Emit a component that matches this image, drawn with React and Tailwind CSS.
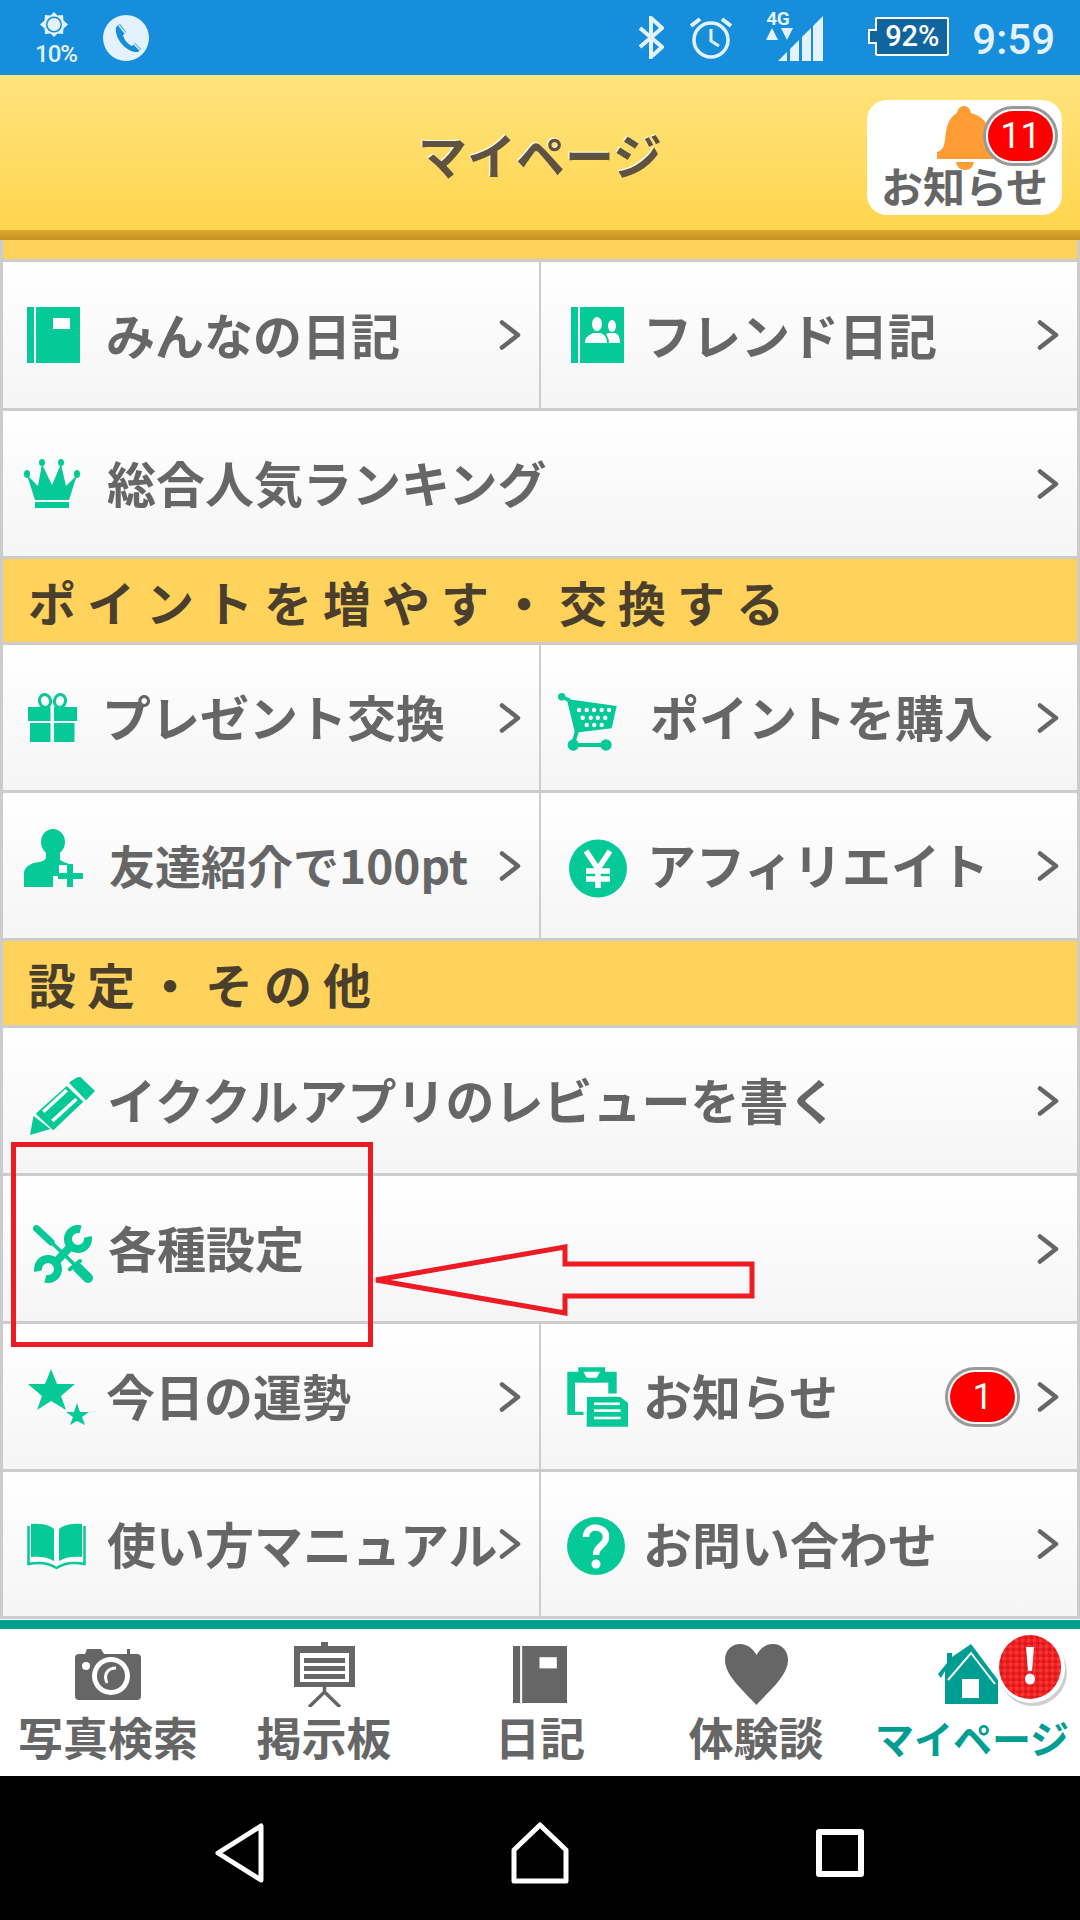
import React from 'react';

const GREEN = '#05c997';
const GRAY = '#666666';

const NoteIcon = ({ className, fill = GREEN }) => (
  <svg className={className} viewBox="0 0 53 56">
    <rect x="0" y="0" width="7" height="56" fill={fill} />
    <rect x="9" y="0" width="44" height="56" fill={fill} />
    <rect x="26" y="11" width="17" height="11" fill="#fff" />
  </svg>
);

const FriendIcon = ({ className }) => (
  <svg className={className} viewBox="0 0 53 56">
    <rect x="0" y="0" width="7" height="56" fill={GREEN} />
    <rect x="9" y="0" width="44" height="56" fill={GREEN} />
    <ellipse cx="26" cy="17" rx="5" ry="7" fill="#fff" />
    <path d="M14 36c0-7 5-8 8-10h8c3 2 6 3 6 10z" fill="#fff" />
    <ellipse cx="41" cy="19" rx="4" ry="6" fill="#fff" />
    <path d="M38 36c0-5-2-7-3-9l3-1h6c3 1 5 3 5 10z" fill="#fff" />
  </svg>
);

const CrownIcon = ({ className }) => (
  <svg className={className} viewBox="0 0 56 49" fill={GREEN}>
    <ellipse cx="3" cy="15" rx="3" ry="4" />
    <ellipse cx="18" cy="3.5" rx="3" ry="3.5" />
    <ellipse cx="37" cy="3.5" rx="3" ry="3.5" />
    <ellipse cx="53" cy="15" rx="3" ry="4" />
    <path d="M3 16 14 27 18 5 28 26 37 5 42 27 53 16 45 41H11z" />
    <rect x="11" y="43" width="34" height="6" />
  </svg>
);

const GiftIcon = ({ className }) => (
  <svg className={className} viewBox="0 0 49 49">
    <ellipse cx="17" cy="8" rx="5.5" ry="6.5" fill="none" stroke={GREEN} strokeWidth="3" transform="rotate(-15 17 8)" />
    <ellipse cx="32" cy="8" rx="5.5" ry="6.5" fill="none" stroke={GREEN} strokeWidth="3" transform="rotate(15 32 8)" />
    <rect x="0" y="14" width="22.5" height="14" fill={GREEN} />
    <rect x="26" y="14" width="23" height="14" fill={GREEN} />
    <rect x="2" y="30" width="20.5" height="19" fill={GREEN} />
    <rect x="26" y="30" width="20.5" height="19" fill={GREEN} />
  </svg>
);

const CART_DOTS = [
  [21, 17], [28.7, 17], [36, 17], [43.7, 17], [51, 17],
  [24.7, 24.7], [32.7, 24.7], [39.7, 24.7], [47.3, 24.7],
  [28.7, 32], [36.3, 32], [43.7, 32],
];

const CartIcon = ({ className }) => (
  <svg className={className} viewBox="0 0 59 58">
    <circle cx="3.7" cy="3.7" r="3.7" fill={GREEN} />
    <path d="M3.7 3.7 12 7.7" stroke={GREEN} strokeWidth="3.5" />
    <path d="M8.7 6 58.7 13 53.700 35.300 17 39.700z" fill={GREEN} />
    <path d="M19 38 15.300 50" stroke={GREEN} strokeWidth="4" />
    <path d="M15.300 52H48" stroke={GREEN} strokeWidth="4" />
    <circle cx="15.300" cy="52" r="5.700" fill={GREEN} />
    <circle cx="48" cy="52" r="5.700" fill={GREEN} />
    {CART_DOTS.map(([x, y]) => (
      <circle key={`${x}-${y}`} cx={x} cy={y} r="2.2" fill="#fff" />
    ))}
  </svg>
);

const PersonPlusIcon = ({ className }) => (
  <svg className={className} viewBox="0 0 59 58" fill={GREEN}>
    <ellipse cx="29" cy="13" rx="12" ry="13" />
    <rect x="18" y="10" width="22" height="8" rx="4" />
    <path d="M22 22h14v9c3 2 7 3 9 4v3H38v9h-9v11H0V45c0-6 4-9 10-11 6-1 12-2 12-6z" />
    <path d="M35 36h9v-4h6v11h9v7h-9v9h-6v-9h-9z" fill="#fff" />
    <path d="M43 35h6v9h10v6H49v8h-6v-8H34v-6h9z" />
  </svg>
);

const YenIcon = ({ className }) => (
  <svg className={className} viewBox="0 0 58 59">
    <circle cx="29" cy="29.5" r="29" fill={GREEN} />
    <path d="M17 12 29 30 41 12M29 29V49M17 32H41M17 40H41" fill="none" stroke="#fff" strokeWidth="5.5" />
  </svg>
);

const PencilIcon = ({ className }) => (
  <svg className={className} viewBox="0 0 65 58">
    <path d="M0 58 3.500 39 20.500 52z" fill={GREEN} />
    <path d="M36.700 9 53.300 24.700 23.300 53.300 5.700 36.700z" fill={GREEN} />
    <path d="M40 5.700 49.300 0 64 14 56 22.300z" fill={GREEN} stroke={GREEN} strokeWidth="1.500" strokeLinejoin="round" />
    <path d="M13.300 34.700 36.700 13.300M22.300 44 46.500 22" fill="none" stroke="#fff" strokeWidth="3.500" />
  </svg>
);

const ToolsIcon = ({ className }) => (
  <svg className={className} viewBox="0 0 60 58" fill="none" stroke={GREEN}>
    <path d="M47.600 4.300A10 10 0 1 0 54.800 11.900" strokeWidth="8" />
    <path d="M38 21 21 39" strokeWidth="8" />
    <path d="M12.400 53.700A10 10 0 1 0 5.200 46.100" strokeWidth="8" />
    <path d="M3.500 3.500 18 17" strokeWidth="7" strokeLinecap="round" />
    <path d="M18 17 42 40" strokeWidth="3.500" />
    <path d="M37 44.300 47 36" strokeWidth="4" strokeLinecap="round" />
    <path d="M45 43 55 53" strokeWidth="10" strokeLinecap="round" />
  </svg>
);

const StarsIcon = ({ className }) => (
  <svg className={className} viewBox="0 0 62 56" fill={GREEN}>
    <path d="M23 0 29 15 47 15 33 27 38 41 23 32 9 41 14 27 0 15 17 15z" />
    <path d="M49 34 52 43 61 43 54 48 57 56 49 52 42 56 45 48 38 43 46 43z" />
  </svg>
);

const ClipIcon = ({ className }) => (
  <svg className={className} viewBox="0 0 62 60">
    <path d="M1.300 4.700H12.300V.3H39V4.700H50.700V48H1.300z" fill={GREEN} />
    <path d="M17.300 4.700H34L30.700 10.700H20.700z" fill="#fff" />
    <rect x="9" y="15.700" width="33.300" height="29" fill="#fff" />
    <path d="M20.700 29.700H54L62 36V59.700H20.700z" fill={GREEN} stroke="#fff" strokeWidth="0" />
    <rect x="18" y="26.500" width="37" height="3.200" fill="#fff" />
    <rect x="17.500" y="26.500" width="3.200" height="22" fill="#fff" />
    <rect x="28" y="35.500" width="26" height="2.600" fill="#fff" />
    <rect x="28" y="42.300" width="26.700" height="2.600" fill="#fff" />
    <rect x="28" y="49.700" width="26.700" height="2.600" fill="#fff" />
  </svg>
);

const BookIcon = ({ className }) => (
  <svg className={className} viewBox="0 0 59 46">
    <path d="M4 1C12 0 21 1 27 6V38C21 34 12 33 4 34z" fill={GREEN} />
    <path d="M55 1C47 0 38 1 32 6V38C38 34 47 33 55 34z" fill={GREEN} />
    <path d="M1.500 3V41C12 39 22 40 29.500 45 37 40 47 39 57.500 41V3" fill="none" stroke={GREEN} strokeWidth="2.500" />
  </svg>
);

const QuestionIcon = ({ className }) => (
  <svg className={className} viewBox="0 0 58 58">
    <circle cx="29" cy="29" r="29" fill={GREEN} />
    <path d="M19 20c0-13 20-12 20 0 0 9-10 8-10 18" fill="none" stroke="#fff" strokeWidth="6.500" />
    <circle cx="29" cy="47" r="4.500" fill="#fff" />
  </svg>
);

const Chevron = () => (
  <svg className="w-[22px] h-[30px] shrink-0" viewBox="0 0 22 30">
    <path d="M3 2.500 19 15 3 27.500" fill="none" stroke={GRAY} strokeWidth="4.500" strokeLinecap="round" strokeLinejoin="round" />
  </svg>
);

const Badge = ({ children, className }) => (
  <div className={`flex items-center justify-center rounded-full border-[3px] border-[#999999] bg-white p-[2px] ${className}`}>
    <div className="w-full h-full rounded-full bg-[#ff0000] flex items-center justify-center text-white font-['Roboto',sans-serif] text-[36px] leading-none">
      {children}
    </div>
  </div>
);

const Cell = ({ icon, label, textClass, badge, sizeClass = 'text-[49px]' }) => (
  <div className="flex-1 min-w-0 flex items-center bg-gradient-to-b from-white to-[#f5f5f5]">
    {icon}
    <span className={`pb-[4px] leading-none font-bold text-[#666666] whitespace-nowrap ${sizeClass} ${textClass}`}>{label}</span>
    <div className="ml-auto mr-[18px] flex items-center gap-[17px]">
      {badge}
      <Chevron />
    </div>
  </div>
);

const Row = ({ className, children }) => <div className={`flex gap-[2px] ${className}`}>{children}</div>;

const SectionHead = ({ className, children }) => (
  <div className={`bg-[#ffd25b] flex items-center pl-[25px] text-[48px] tracking-[11px] leading-none font-bold text-[#4a3f2c] whitespace-nowrap ${className}`}>
    {children}
  </div>
);

const StatusBar = () => (
  <div className="h-[75px] bg-[#168edb] flex items-start text-[#e3f2fd] shrink-0">
    <div className="ml-[36px] w-[40px] flex flex-col items-center pt-[12px]">
      <svg className="w-[28px] h-[25px] mr-[5px]" viewBox="0 0 28 25">
        <path d="M14 0 17.500 3.500 23 3 23.500 8.500 28 12.500 23.500 16.500 23 22 17.500 21.500 14 25 10.500 21.500 5 22 4.500 16.500 0 12.500 4.500 8.500 5 3 10.500 3.500z" fill="#e3f2fd" />
        <circle cx="14" cy="12.500" r="8" fill="#168edb" />
        <circle cx="14" cy="12.500" r="6.500" fill="#e3f2fd" />
      </svg>
      <span className="mt-[5px] font-['Roboto',sans-serif] font-medium text-[24px] leading-none tracking-[-1px] whitespace-nowrap">10%</span>
    </div>
    <svg className="ml-[27px] mt-[15px] w-[46px] h-[46px]" viewBox="0 0 46 46">
      <circle cx="23" cy="23" r="23" fill="#e3f2fd" />
      <path d="M13 12 17 9 23 17 20 20C21 25 25 29 29 31L32 28 38 34 35 37C24 38 11 24 13 12z" fill="#168edb" />
      <path d="M16 10.500 22 18M31 29 37 35" stroke="#e3f2fd" strokeWidth="1.500" />
    </svg>
    <div className="ml-auto flex items-start">
      <svg className="mt-[16px] w-[26px] h-[43px]" viewBox="0 0 26 43">
        <path d="M2 12 24 31 13 41V2L24 12 2 31" fill="none" stroke="#e3f2fd" strokeWidth="4" />
      </svg>
      <svg className="ml-[26px] mt-[16px] w-[42px] h-[43px]" viewBox="0 0 42 43">
        <circle cx="21" cy="24" r="17" fill="none" stroke="#e3f2fd" strokeWidth="3.500" />
        <path d="M21 13V25L29 30" fill="none" stroke="#e3f2fd" strokeWidth="3" />
        <path d="M1 10 10 3M41 10 32 3" stroke="#e3f2fd" strokeWidth="4" />
      </svg>
      <div className="ml-[34px] relative w-[57px] h-[61px]">
        <span className="absolute left-0 top-[9px] font-['Roboto',sans-serif] font-bold text-[19px] leading-none tracking-[-0.5px]">4G</span>
        <svg className="absolute left-0 top-[16px] w-[57px] h-[45px]" viewBox="0 0 57 45" fill="#e3f2fd">
          <path d="M6 12 12 24H0z" />
          <path d="M15 12H27L21 24z" />
          <path d="M12 45 21 36V45z" />
          <path d="M24 33 33 24V45H24z" />
          <path d="M36 21 45 12V45H36z" />
          <path d="M47 10 57 0V45H47z" />
        </svg>
      </div>
      <div className="ml-[45px] mt-[17px] relative w-[81px] h-[39px]">
        <div className="absolute left-[7px] top-0 w-[74px] h-[39px] bg-[#11659f] border-[2px] border-white rounded-[2px] flex items-center justify-center text-white font-['Roboto',sans-serif] font-medium text-[29px] leading-none">
          92%
        </div>
        <div className="absolute left-0 top-[12px] w-[9px] h-[15px] bg-[#11659f] border-l-[2px] border-y-[2px] border-white" />
      </div>
      <span className="ml-[23px] mr-[25px] mt-[18px] font-['Roboto',sans-serif] font-medium text-[42px] leading-[43px] whitespace-nowrap">9:59</span>
    </div>
  </div>
);

const Header = () => (
  <div className="shrink-0">
    <div className="h-[155px] bg-gradient-to-b from-[#ffe37c] to-[#ffd54c] grid grid-cols-[1fr_auto_1fr] items-center">
      <div />
      <span className="pt-[2px] text-[49px] leading-none font-bold text-[#5f5340] [text-shadow:-1px_-1px_0_#fff] whitespace-nowrap">マイページ</span>
      <div className="justify-self-end mr-[18px] relative w-[195px] h-[115px] bg-white rounded-[20px] flex justify-center items-end pb-[9px] mt-[10px]">
        <svg className="absolute left-[70px] top-[6px] w-[62px] h-[64px]" viewBox="0 0 62 64">
          <path d="M27 0C23 0 21 3 20 7 11 12 9 22 8 34 7 40 6 44 0 46V53H62V46C56 44 55 40 54 34 53 22 50 12 34 7 33 3 31 0 27 0z" fill="#ff9c33" />
          <path d="M19 56H37C36 61 33 64 28 64 23 64 20 61 19 56z" fill="#ff9c33" />
        </svg>
        <Badge className="absolute left-[116px] top-[6px] w-[75px] h-[60px]">11</Badge>
        <span className="relative text-[42px] leading-none font-bold text-[#666666] whitespace-nowrap">お知らせ</span>
      </div>
    </div>
    <div className="h-[10px] bg-gradient-to-b from-[#dba92f] to-[#c8901f]" />
  </div>
);

const Menu = () => (
  <div className="bg-[#cccccc] px-[3px] flex flex-col gap-[3px] pb-[3px]">
    <div className="h-[19px] bg-[#ffd25b]" />
    <Row className="h-[146px]">
      <Cell icon={<NoteIcon className="ml-[24px] w-[53px] h-[56px] shrink-0" />} label="みんなの日記" textClass="ml-[26px]" />
      <Cell icon={<FriendIcon className="ml-[30px] w-[53px] h-[56px] shrink-0" />} label="フレンド日記" textClass="ml-[19px]" />
    </Row>
    <Row className="h-[145px]">
      <Cell icon={<CrownIcon className="ml-[21px] w-[56px] h-[49px] shrink-0" />} label="総合人気ランキング" textClass="ml-[27px]" />
    </Row>
    <SectionHead className="h-[83px]">ポイントを増やす・交換する</SectionHead>
    <Row className="h-[145px]">
      <Cell icon={<GiftIcon className="ml-[25px] w-[49px] h-[49px] shrink-0" />} label="プレゼント交換" textClass="ml-[25px]" />
      <Cell icon={<CartIcon className="ml-[17px] w-[59px] h-[58px] shrink-0 mt-[9px]" />} label="ポイントを購入" textClass="ml-[33px]" />
    </Row>
    <Row className="h-[145px]">
      <Cell icon={<PersonPlusIcon className="ml-[21px] w-[59px] h-[58px] shrink-0 mb-[15px]" />} sizeClass="text-[46px]" label="友達紹介で100pt" textClass="ml-[26px]" />
      <Cell icon={<YenIcon className="ml-[28px] w-[58px] h-[59px] shrink-0 mt-[5px]" />} label="アフィリエイト" textClass="ml-[20px]" />
    </Row>
    <SectionHead className="h-[84px]">設定・その他</SectionHead>
    <Row className="h-[145px]">
      <Cell icon={<PencilIcon className="ml-[27px] w-[65px] h-[58px] shrink-0 mt-[10px]" />} label="イククルアプリのレビューを書く" textClass="ml-[12px]" />
    </Row>
    <Row className="h-[145px]">
      <Cell icon={<ToolsIcon className="ml-[30px] w-[60px] h-[58px] shrink-0 mt-[10px]" />} label="各種設定" textClass="ml-[15px]" />
    </Row>
    <Row className="h-[145px]">
      <Cell icon={<StarsIcon className="ml-[25px] w-[62px] h-[56px] shrink-0" />} label="今日の運勢" textClass="ml-[16px]" />
      <Cell
        icon={<ClipIcon className="ml-[25px] w-[62px] h-[60px] shrink-0" />}
        label="お知らせ"
        textClass="ml-[15px]"
        badge={<Badge className="w-[75px] h-[60px]">1</Badge>}
      />
    </Row>
    <Row className="h-[144px]">
      <Cell icon={<BookIcon className="ml-[24px] w-[59px] h-[46px] shrink-0 mt-[4px]" />} label="使い方マニュアル" textClass="ml-[21px]" />
      <Cell icon={<QuestionIcon className="ml-[26px] w-[58px] h-[58px] shrink-0 mt-[4px]" />} label="お問い合わせ" textClass="ml-[18px]" />
    </Row>
  </div>
);

const CameraIcon = () => (
  <svg className="w-[66px] h-[52px]" viewBox="0 0 66 52">
    <path d="M4 6H10L12 1H26L29 6H52V1H55V6H62Q66 6 66 10V48Q66 52 62 52H4Q0 52 0 48V10Q0 6 4 6z" fill={GRAY} />
    <circle cx="36" cy="28" r="19" fill="#fff" />
    <circle cx="36" cy="28" r="14" fill={GRAY} />
    <path d="M32 35C28 26 33 20 41 20" fill="none" stroke="#fff" strokeWidth="3" />
    <circle cx="11" cy="18" r="4" fill="#fff" />
  </svg>
);

const BoardIcon = () => (
  <svg className="w-[61px] h-[65px]" viewBox="0 0 61 65">
    <rect x="27" y="0" width="7" height="6" fill={GRAY} />
    <rect x="0" y="4" width="61" height="41" fill={GRAY} />
    <rect x="6" y="11" width="49" height="29" fill="#fff" />
    <rect x="10" y="16" width="41" height="5" fill={GRAY} />
    <rect x="10" y="24" width="41" height="5" fill={GRAY} />
    <rect x="10" y="32" width="41" height="5" fill={GRAY} />
    <path d="M30.500 45V52M30.500 50 15 65M30.500 50 46 65" fill="none" stroke={GRAY} strokeWidth="3.500" />
  </svg>
);

const HeartIcon = () => (
  <svg className="w-[63px] h-[61px]" viewBox="0 0 63 61">
    <path d="M31.500 61C20 48 0 32 0 16 0 6 7 0 15 0 23 0 28 5 31.500 11 35 5 40 0 48 0 56 0 63 6 63 16 63 32 43 48 31.500 61z" fill={GRAY} />
  </svg>
);

const HouseIcon = () => (
  <svg className="w-[60px] h-[60px] mr-[8px]" viewBox="0 0 60 60">
    <path d="M7 60V27L3 34 0 30 9 19V9H14V13L33 0 60 36V60z" fill="#009e92" />
    <path d="M10 36 33 9 57 40" fill="none" stroke="#fff" strokeWidth="2" />
    <rect x="24" y="35" width="17" height="19" fill="#fff" />
  </svg>
);

const AlertBadge = () => (
  <svg className="absolute left-[133px] top-[4px] w-[72px] h-[74px]" viewBox="0 0 72 74">
    <defs>
      <pattern id="check" width="6" height="6" patternUnits="userSpaceOnUse">
        <rect width="6" height="6" fill="#ee2222" />
        <rect width="3" height="3" fill="#ff3333" />
        <rect x="3" y="3" width="3" height="3" fill="#d81a1a" />
      </pattern>
    </defs>
    <ellipse cx="36" cy="39" rx="34" ry="34" fill="#bbbbbb" opacity="0.7" />
    <ellipse cx="34" cy="35" rx="34" ry="35" fill="#fff" />
    <ellipse cx="33" cy="34" rx="31" ry="32" fill="url(#check)" />
    <path d="M29 14H37L35 38H31z" fill="#fff" />
    <ellipse cx="33" cy="46" rx="5" ry="5.500" fill="#fff" />
  </svg>
);

const Tab = ({ icon, label, active, children }) => (
  <div className="w-[216px] flex flex-col items-center relative">
    <div className="mt-[12px] h-[66px] flex items-center justify-center">{icon}</div>
    <span className={`mt-[8px] leading-[44px] font-bold whitespace-nowrap ${active ? 'text-[#009e92] text-[39px]' : 'text-[#666666] text-[45px]'}`}>
      {label}
    </span>
    {children}
  </div>
);

const TabBar = () => (
  <div className="shrink-0 mt-[1px] bg-white">
    <div className="h-[9px] bg-[#009e8e]" />
    <div className="h-[147px] flex">
      <Tab icon={<CameraIcon />} label="写真検索" />
      <Tab icon={<BoardIcon />} label="掲示板" />
      <Tab icon={<NoteIcon className="w-[54px] h-[59px]" fill={GRAY} />} label="日記" />
      <Tab icon={<HeartIcon />} label="体験談" />
      <Tab icon={<HouseIcon />} label="マイページ" active>
        <AlertBadge />
      </Tab>
    </div>
  </div>
);

const NavBar = () => (
  <div className="flex-1 bg-black px-[90px] pt-[10px] grid grid-cols-3 items-center justify-items-center">
    <svg className="w-[52px] h-[60px]" viewBox="0 0 52 60">
      <path d="M47 3V57L4 30z" fill="none" stroke="#fff" strokeWidth="5" strokeLinejoin="round" />
    </svg>
    <svg className="w-[60px] h-[62px]" viewBox="0 0 60 62">
      <path d="M30 3 56 28V59H4V28z" fill="none" stroke="#fff" strokeWidth="5" strokeLinejoin="round" />
    </svg>
    <div className="w-[48px] h-[48px] border-[6px] border-white rounded-[3px]" />
  </div>
);

const Annotation = () => (
  <>
    <div className="absolute left-[11px] top-[1142px] w-[362px] h-[205px] border-[5px] border-[#ed1c24]" />
    <svg className="absolute left-[370px] top-[1240px] w-[390px] h-[80px]" viewBox="0 0 390 80">
      <path d="M6 40 195 7V24H382V56H195V73z" fill="none" stroke="#ed1c24" strokeWidth="5" />
    </svg>
  </>
);

export default function App() {
  return (
    <div className="relative w-[1080px] h-[1920px] overflow-hidden flex flex-col bg-white font-['Noto_Sans_CJK_JP','Noto_Sans',sans-serif]">
      <StatusBar />
      <Header />
      <Menu />
      <TabBar />
      <NavBar />
      <Annotation />
    </div>
  );
}
